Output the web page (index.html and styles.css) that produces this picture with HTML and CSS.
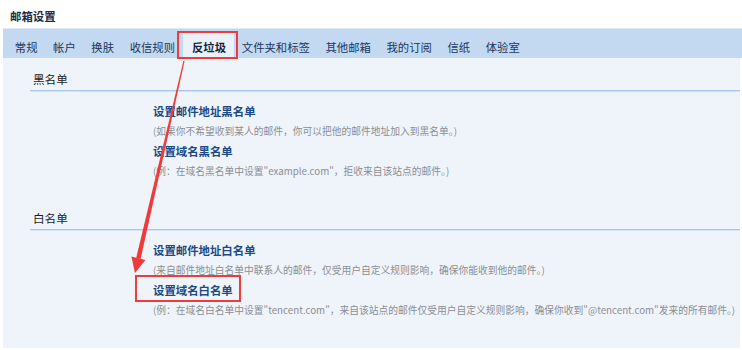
FILE: index.html
```html
<!DOCTYPE html>
<html lang="zh-CN">
<head>
<meta charset="utf-8">
<title>邮箱设置</title>
<link rel="stylesheet" href="styles.css">
</head>
<body>
<div class="page">
  <div class="title">邮箱设置</div>
  <div class="tabs">
    <span class="tab">常规</span>
    <span class="tab">帐户</span>
    <span class="tab">换肤</span>
    <span class="tab">收信规则</span>
    <span class="tab active">反垃圾</span>
    <span class="tab">文件夹和标签</span>
    <span class="tab">其他邮箱</span>
    <span class="tab">我的订阅</span>
    <span class="tab">信纸</span>
    <span class="tab">体验室</span>
  </div>
  <div class="content">
    <div class="section-head">黑名单</div>
    <div class="list">
      <div class="link">设置邮件地址黑名单</div>
      <div class="desc">(如果你不希望收到某人的邮件，你可以把他的邮件地址加入到黑名单。)</div>
      <div class="link">设置域名黑名单</div>
      <div class="desc">(例：在域名黑名单中设置"example.com"，拒收来自该站点的邮件。)</div>
    </div>
    <div class="section-head second">白名单</div>
    <div class="list">
      <div class="link">设置邮件地址白名单</div>
      <div class="desc">(来自邮件地址白名单中联系人的邮件，仅受用户自定义规则影响，确保你能收到他的邮件。)</div>
      <div class="link"><span class="marked">设置域名白名单</span></div>
      <div class="desc">(例：在域名白名单中设置"tencent.com"，来自该站点的邮件仅受用户自定义规则影响，确保你收到"@tencent.com"发来的所有邮件。)</div>
    </div>
  </div>
  <svg class="arrow" width="742" height="350" viewBox="0 0 742 350">
    <polygon points="183.4,61 184.6,61 140.6,258.9 136.2,257.9" fill="#f03a3a"/>
    <polygon points="135,273 131.4,256.6 145.4,259.9" fill="#f03a3a"/>
  </svg>
</div>
</body>
</html>
```
FILE: styles.css
```css
* { box-sizing: border-box; }
html, body { margin: 0; padding: 0; background: #ffffff; }
body {
  font-family: "Noto Sans CJK SC", "Noto Sans", sans-serif;
  color: #222;
}
.page {
  position: relative;
  width: 742px;
  height: 350px;
  overflow: hidden;
}
.title {
  height: 28px;
  padding: 7px 0 0 10px;
  font-size: 11.4px;
  line-height: 18px;
  font-weight: bold;
  color: #1b2e46;
}
.tabs {
  margin-left: 3px;
  height: 30px;
  background: #c3d9f1;
  border-top: 1px solid #dde9f6;
  display: flex;
  align-items: flex-end;
  padding-left: 4px;
}
.tab {
  position: relative;
  height: 25px;
  padding: 3px 7.8px 0;
  line-height: 22px;
  font-size: 11.35px;
  color: #1a365c;
}
.tab.active {
  background: #eaf1fa;
  font-weight: bold;
  color: #14253b;
  padding: 3px 8px 0 9.2px;
}
.tab.active::after {
  content: "";
  position: absolute;
  left: -6px;
  right: -4px;
  top: -2px;
  bottom: -1px;
  border: 2px solid #ee3b3b;
}
.content {
  margin-left: 3px;
  margin-right: 2px;
  height: 290px;
  background: #eff4fb;
  padding-top: 11px;
}
.section-head {
  margin-left: 27px;
  padding-left: 3px;
  height: 22px;
  line-height: 20px;
  font-size: 11.6px;
  color: #1c1c1c;
  border-bottom: 1px solid #a9c7ea;
  box-shadow: 0 1px 0 #d3e3f5;
}
.section-head.second { margin-top: 27px; }
.list {
  margin-top: 10px;
  padding-left: 150px;
}
.link {
  line-height: 20px;
  font-size: 11.4px;
  font-weight: bold;
  color: #1d4a84;
}
.desc {
  line-height: 20px;
  font-size: 9.75px;
  color: #8b8e93;
  white-space: nowrap;
}
.marked { position: relative; }
.marked::after {
  content: "";
  position: absolute;
  left: -18px;
  right: -8px;
  top: -7px;
  bottom: -4px;
  border: 2px solid #ee3b3b;
}
.arrow {
  position: absolute;
  left: 0;
  top: 0;
  pointer-events: none;
}
```
